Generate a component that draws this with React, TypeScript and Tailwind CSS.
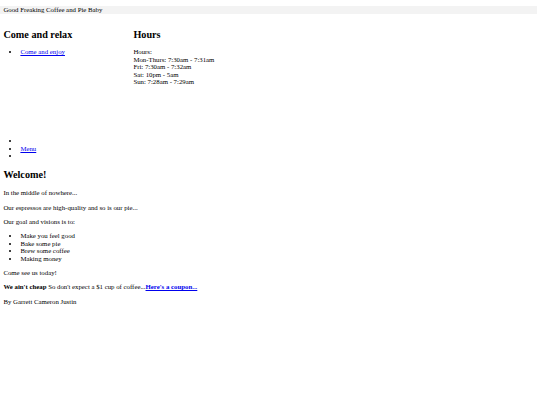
export default function App() {
  const hours = [
    'Hours:',
    'Mon-Thurs: 7:30am - 7:31am',
    'Fri: 7:30am - 7:32am',
    'Sat: 10pm - 5am',
    'Sun: 7:28am - 7:29am',
  ]
  const goals = ['Make you feel good', 'Bake some pie', 'Brew some coffee', 'Making money']
  const link = 'text-[#0000ee] underline'

  return (
    <div className="min-h-[405px] bg-white text-black font-['Liberation_Serif',serif] text-[6.8px] leading-[7.5px]">
      <div className="pt-[6px]">
        <div className="w-[537px] h-[8px] leading-[8px] bg-[#f3f3f3] pl-[3.4px]">Good Freaking Coffee and Pie Baby</div>
      </div>

      <div className="px-[3.4px]">
        <div className="flex h-[101.3px] mt-[15.15px]">
          <div className="w-[130px]">
            <h2 className="text-[10.2px] leading-[11.7px] font-bold">Come and relax</h2>
            <ul className="mt-[7.5px] pl-[17px] list-disc">
              <li><a href="#" className={link}>Come and enjoy</a></li>
            </ul>
          </div>
          <div>
            <h2 className="text-[10.2px] leading-[11.7px] font-bold">Hours</h2>
            <div className="mt-[7.5px]">
              {hours.map((h) => (
                <div key={h}>{h}</div>
              ))}
            </div>
          </div>
        </div>

        <ul className="my-[6.8px] pl-[17px] list-disc">
          <li>&nbsp;</li>
          <li><a href="#" className={link}>Menu</a></li>
          <li>&nbsp;</li>
        </ul>

        <h2 className="mt-[9.4px] mb-[8.5px] text-[10.2px] leading-[11.7px] font-bold">Welcome!</h2>
        <p className="my-[6.8px]">In the middle of nowhere...</p>
        <p className="my-[6.8px]">Our espressos are high-quality and so is our pie...</p>
        <p className="my-[6.8px]">Our goal and visions is to:</p>
        <ul className="my-[6.8px] pl-[17px] list-disc">
          {goals.map((g) => (
            <li key={g}>{g}</li>
          ))}
        </ul>
        <p className="my-[6.8px]">Come see us today!</p>
        <p className="my-[6.8px]">
          <b>We ain't cheap</b> So don't expect a $1 cup of coffee...
          <a href="#" className={`${link} font-bold`}>Here's a coupon...</a>
        </p>
        <p className="my-[6.8px]">By Garrett Cameron Justin</p>
      </div>
    </div>
  )
}
